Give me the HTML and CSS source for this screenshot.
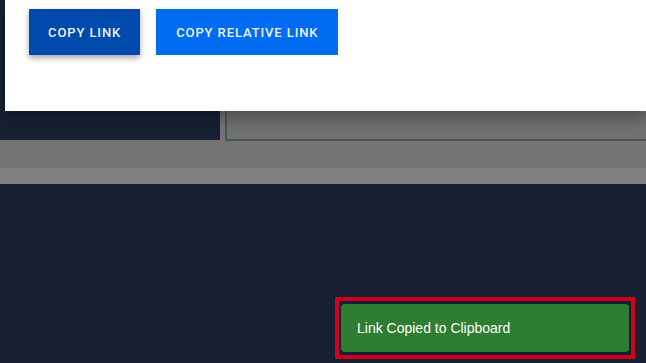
FILE: index.html
```html
<!DOCTYPE html>
<html lang="en">
<head>
    <meta charset="UTF-8">
    <meta name="viewport" content="width=device-width, initial-scale=1.0">
    <title>Share Link</title>
    <link rel="stylesheet" href="styles.css">
</head>
<body>

<div class="dialog">
    <div class="actions">
        <button class="btn btn-primary">Copy Link</button>
        <button class="btn btn-secondary">Copy Relative Link</button>
    </div>
</div>

<div class="stage">
    <div class="stage-top">
        <div class="side-panel"></div>
        <div class="content-panel"></div>
    </div>
    <div class="stage-bar"></div>
</div>

<div class="toast-wrap">
    <div class="toast">Link Copied to Clipboard</div>
</div>

</body>
</html>
```

FILE: styles.css
```css
body {
    margin: 0;
    background-color: #172033;
    font-family: "Liberation Sans", Arial, sans-serif;
    height: 363px;
    overflow: hidden;
    position: relative;
}
.dialog {
    position: relative;
    z-index: 1;
    margin-left: 5px;
    height: 111px;
    background-color: #fff;
    box-shadow: 0 6px 14px rgba(0, 0, 0, 0.35);
    box-sizing: border-box;
    padding: 9px 0 0 24px;
}
.actions {
    display: flex;
    gap: 16px;
}
.btn {
    height: 46px;
    padding: 0 19px;
    border: none;
    color: #eef3fb;
    font-family: Roboto, "Liberation Sans", sans-serif;
    font-size: 13px;
    font-weight: 500;
    letter-spacing: 0.9px;
    text-transform: uppercase;
    cursor: pointer;
}
.btn-primary {
    background-color: #004aad;
    box-shadow: 0 3px 6px rgba(0, 0, 0, 0.35);
}
.btn-secondary {
    background-color: #006cf2;
    padding: 0 20px;
}
.stage {
    background-color: #737373;
}
.stage-top {
    display: flex;
    height: 30px;
}
.side-panel {
    width: 220px;
    height: 29px;
    background-color: #172033;
}
.content-panel {
    flex: 1;
    margin-left: 5px;
    border-left: 2px solid #48575f;
    border-bottom: 2px solid #48575f;
    background-color: #707070;
}
.stage-bar {
    margin-top: 27px;
    height: 16px;
    background-color: #7f7f7f;
}
.toast-wrap {
    position: absolute;
    right: 11px;
    bottom: 4px;
    width: 288px;
    padding: 3px 2px;
    border: 4px solid #d0021b;
}
.toast {
    height: 48px;
    line-height: 48px;
    padding-left: 16px;
    background-color: #2e7d32;
    border-radius: 4px;
    color: #fff;
    font-size: 14px;
}
```
